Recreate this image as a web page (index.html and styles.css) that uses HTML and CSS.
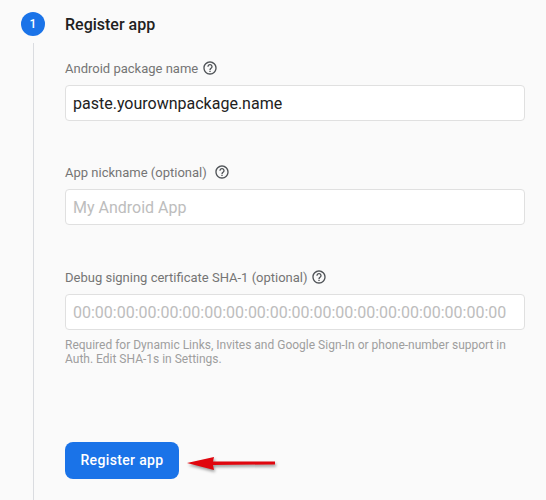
FILE: index.html
```html
<!DOCTYPE html>
<html lang="en">
<head>
<meta charset="utf-8">
<title>Register app</title>
<link rel="stylesheet" href="styles.css">
</head>
<body>
<main class="step">
  <div class="rail">
    <div class="badge">1</div>
    <div class="rail-line"></div>
  </div>
  <div class="content">
    <h2 class="title">Register app</h2>
    <section class="field field-package">
      <div class="label">Android package name
        <svg class="help" viewBox="0 0 24 24"><use href="#help"/></svg>
      </div>
      <input class="input input-filled" value="paste.yourownpackage.name" readonly>
    </section>
    <section class="field field-nick">
      <div class="label label-wide">App nickname (optional)
        <svg class="help" viewBox="0 0 24 24"><use href="#help"/></svg>
      </div>
      <input class="input" placeholder="My Android App" readonly>
    </section>
    <section class="field field-sha">
      <div class="label label-tight">Debug signing certificate SHA-1 (optional)
        <svg class="help" viewBox="0 0 24 24"><use href="#help"/></svg>
      </div>
      <input class="input" placeholder="00:00:00:00:00:00:00:00:00:00:00:00:00:00:00:00:00:00:00:00" readonly>
      <p class="hint">Required for Dynamic Links, Invites and Google Sign-In or phone-number support in Auth. Edit SHA-1s in Settings.</p>
    </section>
    <div class="actions">
      <button class="primary" type="button">Register app</button>
      <svg class="arrow" viewBox="0 0 96 24" width="96" height="24">
        <path class="arrow-body" d="M0 14 L27 8 L26 12.500 L88 12.500 L88 15.500 L26 16 L27 21 Z"/>
      </svg>
    </div>
  </div>
</main>
<svg class="defs" width="0" height="0">
  <symbol id="help" viewBox="0 0 24 24">
    <path d="M11 18h2v-2h-2v2zm1-16C6.480 2 2 6.480 2 12s4.480 10 10 10 10-4.480 10-10S17.520 2 12 2zm0 18c-4.410 0-8-3.590-8-8s3.590-8 8-8 8 3.590 8 8-3.590 8-8 8zm0-14c-2.210 0-4 1.790-4 4h2c0-1.100.9-2 2-2s2 .9 2 2c0 2-3 1.750-3 5h2c0-2.250 3-2.500 3-5 0-2.210-1.790-4-4-4z"/>
  </symbol>
</svg>
</body>
</html>
```
FILE: styles.css
```css
* { box-sizing: border-box; }
html, body { height: 100%; }
body {
  margin: 0;
  background: #fafafa;
  font-family: Roboto, "Liberation Sans", sans-serif;
  overflow: hidden;
}
.defs { display: block; height: 0; }
.step {
  display: flex;
  height: 500px;
  padding: 12px 21px 0;
  gap: 20px;
}
.rail {
  width: 24px;
  display: flex;
  flex-direction: column;
  align-items: center;
}
.badge {
  width: 24px;
  height: 24px;
  border-radius: 50%;
  background: #1a73e8;
  color: #fff;
  font-size: 12px;
  font-weight: 500;
  display: flex;
  align-items: center;
  justify-content: center;
}
.rail-line {
  width: 1px;
  flex: 1;
  margin-top: 7px;
  background: #dadce0;
}
.content { width: 460px; }
.title {
  margin: 0;
  height: 26px;
  font-size: 16px;
  font-weight: 500;
  line-height: 26px;
  color: #212121;
}
.field { display: block; }
.field-package { margin-top: 20px; }
.field-nick { margin-top: 41px; }
.field-sha { margin-top: 42px; }
.label {
  display: flex;
  align-items: center;
  gap: 4px;
  height: 20px;
  margin-bottom: 7px;
  font-size: 13px;
  color: #757575;
}
.label-wide { gap: 7px; }
.label-tight { gap: 3px; }
.help { width: 16px; height: 16px; fill: #4f5357; }
.input {
  display: block;
  width: 100%;
  height: 36px;
  padding: 0 7px;
  background: #fff;
  border: 1px solid #e0e0e0;
  border-radius: 4px;
  outline: none;
  font-family: inherit;
  font-size: 16px;
  color: #212121;
}
.input::placeholder { color: #bdbdbd; opacity: 1; }
.hint {
  margin: 8px 0 0;
  font-size: 12px;
  line-height: 14px;
  color: #9e9e9e;
}
.actions {
  display: flex;
  align-items: center;
  gap: 8px;
  margin-top: 76px;
}
.primary {
  width: 114px;
  height: 37px;
  padding: 0 0 2px;
  border: 0;
  border-radius: 8px;
  background: #1a73e8;
  color: #fff;
  font-family: inherit;
  font-size: 14px;
  font-weight: 500;
  letter-spacing: .35px;
}
.arrow { flex: none; filter: drop-shadow(1px 2px 1.500px rgba(0, 0, 0, .4)); }
.arrow-body { fill: #e0060e; }
```
